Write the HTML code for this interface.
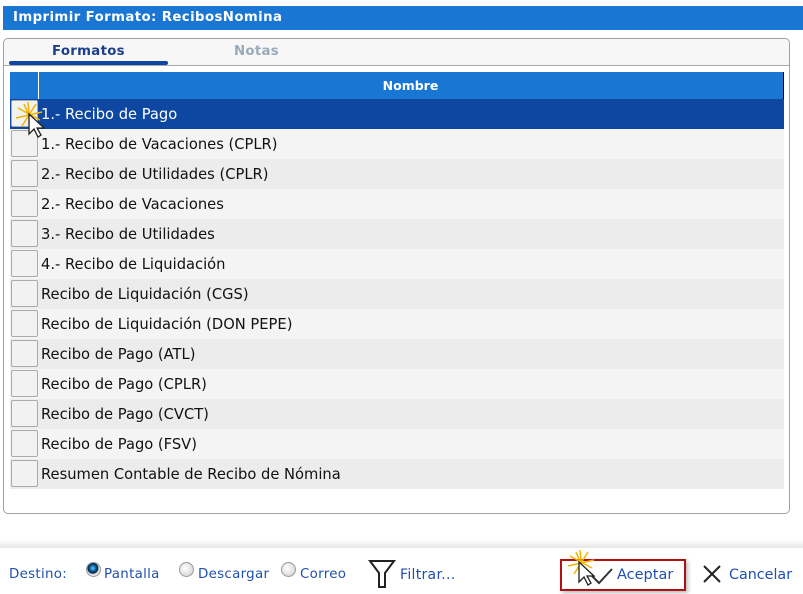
<!DOCTYPE html>
<html><head><meta charset="utf-8"><style>
*{margin:0;padding:0;box-sizing:border-box}
body{width:803px;height:594px;background:#fff;font-family:"DejaVu Sans","Liberation Sans",sans-serif;position:relative;overflow:hidden}
.title{position:absolute;left:3px;top:6px;width:800px;height:24px;background:#1976d2;color:#fff;font-weight:bold;font-size:13.3px;letter-spacing:.4px;line-height:24px;padding-left:10px}
.panel{position:absolute;left:3px;top:38px;width:787px;height:476px;border:1px solid #a0a0a0;border-radius:5px;background:#fff}
.tabs{position:absolute;left:0;top:0;width:785px;height:27px;background:#f7f7f7;border-bottom:1px solid #a8a8a8;border-radius:5px 5px 0 0}
.tab{position:absolute;top:5px;font-weight:bold;font-size:13.3px;letter-spacing:.3px}
.ul{position:absolute;left:5px;top:22px;width:159px;height:4px;background:#0d47a1;border-radius:2px}
.hdr{position:absolute;left:10px;top:72px;width:774px;height:27px;background:#1976d2;border-right:1px solid #000}
.hdr .d{position:absolute;left:28px;top:0;width:1px;height:27px;background:#fff}
.hdr span{position:absolute;left:0;right:0;text-align:center;color:#fff;font-weight:bold;font-size:12.5px;line-height:27px;padding-left:28px}
.row{position:absolute;left:10px;width:774px;height:30px;font-size:14.7px;line-height:30px;color:#111}
.row .cb{position:absolute;left:1px;top:1px;width:27px;height:27px;border:1px solid #aaa;border-radius:2px;background:#f2f2f2}
.row .t{position:absolute;left:31px;top:1px}
.foot{position:absolute;left:0;top:540px;width:803px;height:8px;background:linear-gradient(#fff,#e6e6e6)}
.f{position:absolute;top:567px;font-size:13.4px;color:#1f4fb0;letter-spacing:.3px}
.rad{position:absolute;top:562px;width:15px;height:15px;border-radius:50%;border:1px solid #999;background:radial-gradient(circle at 40% 40%,#fff,#ccc)}
</style></head><body>
<div class="title">Imprimir Formato: RecibosNomina</div>
<div class="panel">
<div class="tabs"><div class="tab" style="left:48px;color:#1d3f8a">Formatos</div><div class="tab" style="left:230px;color:#9ab">Notas</div><div class="ul"></div></div>
</div>
<div class="hdr"><div class="d"></div><span>Nombre</span></div>
<div class="row" style="top:99px;background:#0d47a1;color:#fff"><div class="cb"></div><div class="t">1.- Recibo de Pago</div></div>
<div class="row" style="top:129px;background:#f4f4f4"><div class="cb"></div><div class="t">1.- Recibo de Vacaciones (CPLR)</div></div>
<div class="row" style="top:159px;background:#ececec"><div class="cb"></div><div class="t">2.- Recibo de Utilidades (CPLR)</div></div>
<div class="row" style="top:189px;background:#f4f4f4"><div class="cb"></div><div class="t">2.- Recibo de Vacaciones</div></div>
<div class="row" style="top:219px;background:#ececec"><div class="cb"></div><div class="t">3.- Recibo de Utilidades</div></div>
<div class="row" style="top:249px;background:#f4f4f4"><div class="cb"></div><div class="t">4.- Recibo de Liquidación</div></div>
<div class="row" style="top:279px;background:#ececec"><div class="cb"></div><div class="t">Recibo de Liquidación (CGS)</div></div>
<div class="row" style="top:309px;background:#f4f4f4"><div class="cb"></div><div class="t">Recibo de Liquidación (DON PEPE)</div></div>
<div class="row" style="top:339px;background:#ececec"><div class="cb"></div><div class="t">Recibo de Pago (ATL)</div></div>
<div class="row" style="top:369px;background:#f4f4f4"><div class="cb"></div><div class="t">Recibo de Pago (CPLR)</div></div>
<div class="row" style="top:399px;background:#ececec"><div class="cb"></div><div class="t">Recibo de Pago (CVCT)</div></div>
<div class="row" style="top:429px;background:#f4f4f4"><div class="cb"></div><div class="t">Recibo de Pago (FSV)</div></div>
<div class="row" style="top:459px;background:#ececec"><div class="cb"></div><div class="t">Resumen Contable de Recibo de Nómina</div></div>
<svg style="position:absolute;left:14px;top:100px" width="36" height="40"><g stroke="#f0b400" stroke-width="1.5"><path d="M14 2L16 24M4 8L26 20M2 18L28 12M8 26L22 4M20 28L10 4"/></g><path d="M15 14L15 34L20 29L24 37L27 35L23 28L30 28Z" fill="#fff" stroke="#222" stroke-width="1.3"/></svg>
<div class="foot"></div>
<div class="f" style="left:9px">Destino:</div>
<div class="rad" style="left:86px;background:radial-gradient(circle at 45% 40%,#6cf 0,#0a5fa8 3px,#023 5px,#ddd 6px,#eee)"></div><div class="f" style="left:104px">Pantalla</div>
<div class="rad" style="left:179px"></div><div class="f" style="left:198px">Descargar</div>
<div class="rad" style="left:281px"></div><div class="f" style="left:300px">Correo</div>
<svg style="position:absolute;left:368px;top:559px" width="28" height="30"><path d="M2 2H26L17 14V28H11V14Z" fill="none" stroke="#222" stroke-width="2"/></svg>
<div class="f" style="left:400px;font-size:14px;top:567px">Filtrar...</div>
<div style="position:absolute;left:560px;top:559px;width:126px;height:32px;border:2px solid #b01010;box-shadow:2px 2px 4px #bbb"></div>
<svg style="position:absolute;left:590px;top:563px" width="24" height="24"><path d="M2 13L9 20L22 6" fill="none" stroke="#333" stroke-width="2"/></svg>
<div class="f" style="left:617px;font-size:14.5px;top:567px;letter-spacing:0">Aceptar</div>
<svg style="position:absolute;left:566px;top:548px" width="34" height="42"><g stroke="#f0b400" stroke-width="1.5"><path d="M14 2L16 24M4 8L26 20M2 18L28 12M8 26L22 4M20 28L10 4"/></g><path d="M13 14L13 34L18 29L22 37L25 35L21 28L28 28Z" fill="#fff" stroke="#222" stroke-width="1.3"/></svg>
<svg style="position:absolute;left:702px;top:564px" width="20" height="20"><path d="M2 2L18 18M18 2L2 18" stroke="#222" stroke-width="2"/></svg>
<div class="f" style="left:729px;font-size:14.3px;top:567px;letter-spacing:0">Cancelar</div>
</body></html>
